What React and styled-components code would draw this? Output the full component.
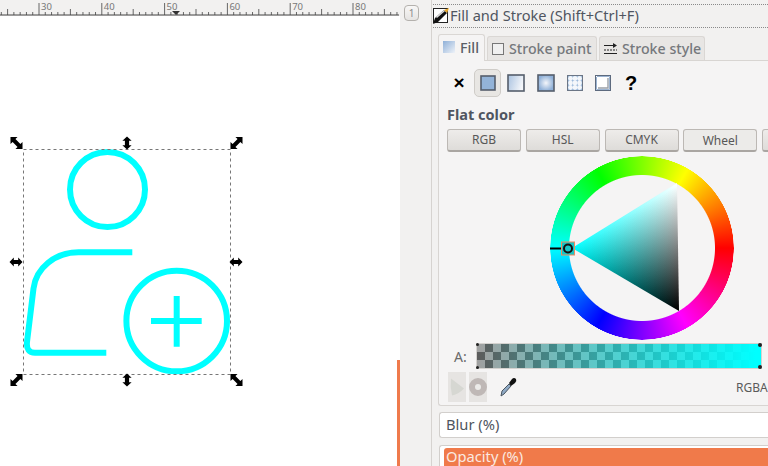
import React from 'react';
import styled, { createGlobalStyle } from 'styled-components';

const Global = createGlobalStyle`
  html, body { margin: 0; padding: 0; background: #f2f1f0; }
  body { font-family: "Noto Sans", "Open Sans", sans-serif; color: #4c4c4c; }
`;

const Root = styled.div`
  width: 768px;
  height: 466px;
  display: flex;
  overflow: hidden;
  position: relative;
  background: #f2f1f0;
`;

const LeftColumn = styled.div`
  width: 400px;
  flex: none;
  display: flex;
  flex-direction: column;
  position: relative;
`;

const RulerBar = styled.svg`
  display: block;
  width: 399px;
  height: 16px;
  flex: none;
`;

const Canvas = styled.div`
  flex: 1;
  background: #fff;
  padding-top: 109px;
`;

const ScrollThumb = styled.div`
  position: absolute;
  right: 0;
  top: 360px;
  bottom: 0;
  width: 3px;
  background: #ef7a4c;
`;

const Gutter = styled.div`
  width: 30px;
  flex: none;
  padding: 5px 0 0 4px;
  box-sizing: border-box;
`;

const CornerButton = styled.div`
  width: 15px;
  height: 16px;
  box-sizing: border-box;
  border: 1px solid #b4b1ad;
  border-radius: 4px;
  background: linear-gradient(#f8f7f6, #e6e4e2);
  font-size: 10px;
  line-height: 14px;
  text-align: center;
  color: #8a8a8a;
`;

const Panel = styled.div`
  flex: 1;
  min-width: 0;
  border-left: 1px solid #d6d3d0;
  margin-left: 1px;
  padding: 4px 0 0 1px;
  display: flex;
  flex-direction: column;
  overflow: hidden;
`;

const TitleBar = styled.div`
  height: 22px;
  flex: none;
  display: flex;
  align-items: center;
  border-top: 1px dotted #8a8a8a;
  border-bottom: 1px dotted #8a8a8a;
  font-size: 14.6px;
  white-space: nowrap;
  color: #4f5560;
`;

const TitleText = styled.span`
  margin-bottom: 2px;
`;

const Body = styled.div`
  padding: 6px 0 0 5px;
  width: 340px;
  display: flex;
  flex-direction: column;
`;

const TabRow = styled.div`
  display: flex;
  gap: 2px;
  height: 26px;
  align-items: flex-end;
`;

const Tab = styled.div`
  height: ${(p) => (p.$active ? 27 : 24)}px;
  margin-bottom: ${(p) => (p.$active ? -1 : 0)}px;
  padding-bottom: ${(p) => (p.$active ? 2 : 0)}px;
  position: relative;
  width: ${(p) => p.$w}px;
  box-sizing: border-box;
  display: flex;
  align-items: center;
  gap: 5px;
  padding-left: 4px;
  border: 1px solid #dad7d4;
  border-bottom: none;
  border-radius: 3px 3px 0 0;
  background: ${(p) => (p.$active ? '#f5f4f4' : '#e8e6e4')};
  font-size: 14.2px;
  font-weight: 500;
  color: ${(p) => (p.$active ? '#5a5f66' : '#75787c')};
  white-space: nowrap;
`;

const Notebook = styled.div`
  height: 346px;
  width: 340px;
  box-sizing: border-box;
  border: 1px solid #d8d5d2;
  border-right: none;
  border-radius: 0 0 0 3px;
  background: #f5f4f4;
  padding: 8px 0 0 8px;
  display: flex;
  flex-direction: column;
`;

const PaintRow = styled.div`
  display: flex;
  align-items: center;
  height: 28px;
`;

const PaintSlot = styled.div`
  width: ${(p) => p.$w}px;
  height: 28px;
  flex: none;
  box-sizing: border-box;
  display: flex;
  align-items: center;
  justify-content: center;
  margin-right: ${(p) => p.$mr || 0}px;
  ${(p) => p.$on && `
    border: 1px solid #cfccc8;
    border-radius: 5px;
    background: #e8e6e3;
  `}
`;

const Mark = styled.span`
  font-family: "Liberation Sans", sans-serif;
  font-weight: 700;
  font-size: ${(p) => p.$size}px;
  color: #000;
`;

const SectionLabel = styled.div`
  font-size: 14.5px;
  font-weight: 700;
  color: #4f5560;
  line-height: 18px;
  margin-top: 8px;
`;

const ModeRow = styled.div`
  display: flex;
  gap: 4.75px;
  margin-top: 6px;
`;

const ModeButton = styled.div`
  width: 74px;
  height: 23px;
  flex: none;
  box-sizing: border-box;
  border: 1px solid #bcb8b4;
  border-bottom: 2px solid #aaa6a2;
  border-radius: 3px;
  background: ${(p) => (p.$on ? '#ecebe9' : 'linear-gradient(#eeecea, #dedcd9)')};
  font-size: 12px;
  line-height: ${(p) => (p.$on ? 22 : 20)}px;
  text-align: center;
  color: #585858;
`;

const WheelArea = styled.div`
  height: 185px;
  margin-top: 4px;
  padding-left: 103px;
`;

const Wheel = styled.div`
  position: relative;
  width: 184px;
  height: 184px;
`;

const Ring = styled.div`
  width: 100%;
  height: 100%;
  border-radius: 50%;
  background: conic-gradient(from 90deg, #f00, #f0f, #00f, #0ff, #0f0, #ff0, #f00);
  mask: radial-gradient(circle closest-side, transparent 72.5px, #000 73.5px, #000 91.5px, transparent 92px);
`;

const WheelOverlay = styled.svg`
  position: absolute;
  inset: 0;
  width: 184px;
  height: 184px;
`;

const BlendLayer = styled.rect`
  mix-blend-mode: plus-lighter;
`;

const AlphaRow = styled.div`
  display: flex;
  align-items: center;
  height: 24px;
  margin-top: 3px;
`;

const AlphaLabel = styled.div`
  width: 30px;
  padding-left: 7px;
  box-sizing: border-box;
  font-size: 14px;
  color: #6a6a6a;
`;

const AlphaTrack = styled.div`
  position: relative;
  width: 284px;
  height: 24px;
  box-sizing: border-box;
  background:
    linear-gradient(90deg, rgba(0, 255, 255, 0), #0ff 98%),
    conic-gradient(#5c5c5c 25%, #a0a0a0 0 50%, #5c5c5c 0 75%, #a0a0a0 0) 0 0 / 16px 16px;
  box-shadow: 0 0 0 1px #d4d2cf;
`;

const Corner = styled.i`
  position: absolute;
  width: ${(p) => (p.$big ? 4 : 3)}px;
  height: ${(p) => (p.$big ? 4 : 3)}px;
  border-radius: 50%;
  background: #222;
  ${(p) => (p.$top ? 'top: -1px;' : 'bottom: -1px;')}
  ${(p) => (p.$left ? 'left: -1px;' : 'right: -1px;')}
`;

const ToolRow = styled.div`
  display: flex;
  align-items: center;
  margin-top: 4px;
  padding-left: 1px;
  height: 30px;
`;

const ToolToggle = styled.div`
  width: 18px;
  height: 30px;
  margin-right: 3px;
  background: #e6e4e2;
  display: flex;
  align-items: center;
  justify-content: center;
`;

const DropperSlot = styled.div`
  margin-left: 10px;
  display: flex;
`;

const Readout = styled.div`
  margin-left: auto;
  font-size: 12px;
  color: #5a5a5a;
  width: 42px;
  white-space: nowrap;
`;

const Frame = styled.div`
  margin: 6px 0 0 1px;
  height: 26px;
  width: 340px;
  box-sizing: border-box;
  border: 1px solid #d2cfcc;
  border-right: none;
  border-radius: 3px 0 0 3px;
  background: #fff;
  padding-left: 6px;
  font-size: 14.7px;
  line-height: 23px;
  color: #4f5560;
`;

const OpacityFrame = styled.div`
  margin: 7px 0 0 1px;
  width: 340px;
  height: 30px;
  box-sizing: border-box;
  border: 1px solid #d2cfcc;
  border-right: none;
  border-radius: 3px 0 0 3px;
  background: #fff;
  padding: 2px 0 0 4px;
`;

const OpacityFill = styled.div`
  height: 24px;
  border-radius: 3px 0 0 3px;
  background: #f07a4a;
  color: #fbe9e0;
  font-size: 14.7px;
  line-height: 17px;
  padding-left: 2px;
`;

function Ruler() {
  const origin = 39;
  const step = 62.8;
  const ticks = [];
  for (let i = -6; i < 60; i++) {
    const x = origin + (i * step) / 10;
    if (x < 0 || x > 399) continue;
    const major = i % 10 === 0;
    const mid = Math.abs(i % 5) === 0;
    ticks.push(
      <line key={i} x1={x} x2={x} y1={major ? 3 : mid ? 9 : 12} y2={15} stroke="#666" strokeWidth="1" />
    );
  }
  return (
    <RulerBar viewBox="0 0 399 16">
      {ticks}
      <line x1="0" x2="399" y1="15" y2="15" stroke="#444" strokeWidth="1" />
      {[30, 40, 50, 60, 70, 80].map((n, i) => (
        <text key={n} x={origin + 2 + i * step} y="10" fontSize="9.5" fill="#777" fontFamily="Noto Sans">{n}</text>
      ))}
      <polygon points="172,11 180,11 176,15" fill="#333" />
    </RulerBar>
  );
}

const ARROW_STRAIGHT = 'M-6.5 0 L-2.2 -4.6 L-2.2 -2.1 L2.2 -2.1 L2.2 -4.6 L6.5 0 L2.2 4.6 L2.2 2.1 L-2.2 2.1 L-2.2 4.6 Z';
const ARROW_DIAGONAL = 'M-8.5 0 L-3.5 -5 L-3.5 -2 L3.5 -2 L3.5 -5 L8.5 0 L3.5 5 L3.5 2 L-3.5 2 L-3.5 5 Z';
const handles = [
  [16.5, 143, 45, ARROW_DIAGONAL], [127, 143, 90, ARROW_STRAIGHT], [236.5, 143, -45, ARROW_DIAGONAL],
  [16, 262, 0, ARROW_STRAIGHT], [236, 262, 0, ARROW_STRAIGHT],
  [16.5, 380, -45, ARROW_DIAGONAL], [127, 380, 90, ARROW_STRAIGHT], [236.5, 380, 45, ARROW_DIAGONAL],
];

function Selection() {
  return (
    <svg width="250" height="270" viewBox="0 125 250 270" style={{ display: 'block' }}>
      <g fill="none" stroke="#0ff" strokeWidth="6">
        <circle cx="107.5" cy="189.5" r="37.5" />
        <path d="M132.3 252.3 H78.5 C55 252.3 36 268 33.5 288.5 L27 342 C26.3 349 29 352.7 35 352.7 H106.3" />
        <circle cx="176.7" cy="321" r="50.3" />
        <path d="M151 321 H201.7 M176.7 296 V346.7" />
      </g>
      <rect x="23.5" y="149.5" width="207" height="225" fill="none" stroke="#777" strokeDasharray="3 3" />
      {handles.map(([x, y, r, d]) => (
        <path key={`${x}-${y}`} d={d} transform={`translate(${x} ${y}) rotate(${r})`} fill="#000" />
      ))}
    </svg>
  );
}

function WheelDrawing() {
  // wheel box starts at page x 550, y 156
  // triangle = cyan share + white share added together, clipped after blending so edges stay clean
  return (
    <WheelOverlay viewBox="550 156 184 184">
      <defs>
        <clipPath id="triangleClip">
          <polygon points="572,248 677,183 679,311" />
        </clipPath>
        <linearGradient id="cyanShare" gradientUnits="userSpaceOnUse" x1="572" y1="248" x2="678" y2="249.7">
          <stop offset="0" stopColor="#0ff" />
          <stop offset="1" stopColor="#000" />
        </linearGradient>
        <linearGradient id="whiteShare" gradientUnits="userSpaceOnUse" x1="621.5" y1="277.2" x2="677" y2="183">
          <stop offset="0" stopColor="#000" />
          <stop offset="1" stopColor="#fff" />
        </linearGradient>
      </defs>
      <g clipPath="url(#triangleClip)">
        <rect x="565" y="178" width="120" height="140" fill="url(#cyanShare)" />
        <BlendLayer x="565" y="178" width="120" height="140" fill="url(#whiteShare)" />
      </g>
      <line x1="550" x2="563" y1="248.5" y2="248.5" stroke="#000" strokeWidth="2" />
      <rect x="561.5" y="242" width="13" height="13" fill="#17c4c4" stroke="#f08a60" />
      <circle cx="568" cy="248.5" r="4" fill="none" stroke="#111" strokeWidth="2" />
    </WheelOverlay>
  );
}

function Swatch({ fill, size, defs }) {
  return (
    <svg width={size} height={size} viewBox={`0 0 ${size} ${size}`}>
      {defs}
      <rect x="1" y="1" width={size - 2} height={size - 2} fill={fill} stroke="#555e6c" strokeWidth="1.6" />
    </svg>
  );
}

function PatternSwatch() {
  return (
    <svg width="16" height="16" viewBox="0 0 16 16">
      <rect x="0.5" y="0.5" width="15" height="15" fill="#93b3d8" stroke="#6c7686" />
      {[3.5, 8, 12.5].flatMap((x) => [3.5, 8, 12.5].map((y) => (
        <circle key={`${x}${y}`} cx={x} cy={y} r="2.4" fill="#f4f7fb" />
      )))}
    </svg>
  );
}

function NoneSwatch() {
  return (
    <svg width="16" height="16" viewBox="0 0 16 16">
      <rect x="0.5" y="0.5" width="15" height="15" fill="#fff" stroke="#5d6a7e" />
      <path d="M2 1.5 H14.5 V14.5 H1.5 V2" fill="none" stroke="#9cb4d2" />
      <path d="M3 13 H13 V3" fill="none" stroke="#9aa0a8" strokeWidth="1.4" />
    </svg>
  );
}

function TitleIcon() {
  return (
    <svg width="17" height="18" viewBox="0 0 17 18">
      <rect x="0.5" y="1.5" width="14" height="14" fill="#fff" stroke="#222" />
      <path d="M0 17 L2 11 L11 3 L14 6 L5 15 Z" fill="#111" />
      <path d="M3 10 L11 3 L12 4 L4 11 Z" fill="#ddd" />
      <path d="M11 3 L16 1 L14 6 Z" fill="#e8a92e" />
    </svg>
  );
}

function StrokeStyleIcon() {
  return (
    <svg width="13" height="12" viewBox="0 0 13 12">
      <path d="M0 2.5 H10" stroke="#222" />
      <path d="M9 0 L13 2.5 L9 5 Z" fill="#222" />
      <path d="M0 7 H13" stroke="#222" strokeDasharray="2 1" />
      <path d="M0 10.5 H13" stroke="#222" />
    </svg>
  );
}

function Dropper() {
  return (
    <svg width="17" height="20" viewBox="0 0 17 20">
      <path d="M1 19 L2 14 L9 7 L11 9 L4 17 Z" fill="#8fa9c4" stroke="#4a5560" />
      <path d="M9 6 L12 2 Q14 0 16 2 Q17 4 15 6 L11 9 Z" fill="#111" />
    </svg>
  );
}

export default function App() {
  return (
    <Root>
      <Global />
      <LeftColumn>
        <Ruler />
        <Canvas>
          <Selection />
        </Canvas>
        <ScrollThumb />
      </LeftColumn>
      <Gutter>
        <CornerButton>1</CornerButton>
      </Gutter>
      <Panel>
        <TitleBar>
          <TitleIcon />
          <TitleText>Fill and Stroke (Shift+Ctrl+F)</TitleText>
        </TitleBar>
        <Body>
          <TabRow>
            <Tab $active $w={47}>
              <svg width="12" height="12"><defs><linearGradient id="tf" x1="0" y1="0" x2="1" y2="1"><stop offset="0" stopColor="#8fb0d8" /><stop offset="1" stopColor="#eef2f8" /></linearGradient></defs><rect width="12" height="12" fill="url(#tf)" /></svg>
              Fill
            </Tab>
            <Tab $w={110}>
              <svg width="12" height="12"><rect x="0.5" y="0.5" width="11" height="11" fill="#f0f0f0" stroke="#777" /></svg>
              Stroke paint
            </Tab>
            <Tab $w={106}>
              <StrokeStyleIcon />
              Stroke style
            </Tab>
          </TabRow>
          <Notebook>
            <PaintRow>
              <PaintSlot $w={24} $mr={3}><Mark $size={19}>×</Mark></PaintSlot>
              <PaintSlot $w={27} $on>
                <Swatch fill="#93b3d8" size={16} />
              </PaintSlot>
              <PaintSlot $w={30}>
                <Swatch
                  size={18}
                  fill="url(#lin)"
                  defs={<defs><linearGradient id="lin" x1="0" y1="0" x2="1" y2="0.3"><stop offset="0" stopColor="#a9c2e0" /><stop offset="1" stopColor="#f4f6fa" /></linearGradient></defs>}
                />
              </PaintSlot>
              <PaintSlot $w={30}>
                <Swatch
                  size={18}
                  fill="url(#rad)"
                  defs={<defs><radialGradient id="rad"><stop offset="0" stopColor="#f4f6fa" /><stop offset="1" stopColor="#8fb0d8" /></radialGradient></defs>}
                />
              </PaintSlot>
              <PaintSlot $w={28}><PatternSwatch /></PaintSlot>
              <PaintSlot $w={28}><NoneSwatch /></PaintSlot>
              <PaintSlot $w={28}><Mark $size={20}>?</Mark></PaintSlot>
            </PaintRow>
            <SectionLabel>Flat color</SectionLabel>
            <ModeRow>
              <ModeButton>RGB</ModeButton>
              <ModeButton>HSL</ModeButton>
              <ModeButton>CMYK</ModeButton>
              <ModeButton $on>Wheel</ModeButton>
              <ModeButton />
            </ModeRow>
            <WheelArea>
              <Wheel>
                <Ring />
                <WheelDrawing />
              </Wheel>
            </WheelArea>
            <AlphaRow>
              <AlphaLabel>A:</AlphaLabel>
              <AlphaTrack>
                <Corner $top $left />
                <Corner $left />
                <Corner $top $big />
                <Corner $big />
              </AlphaTrack>
            </AlphaRow>
            <ToolRow>
              <ToolToggle>
                <svg width="16" height="20" viewBox="0 0 16 20"><path d="M2 1.5 L15 11.5 Q10 17 3 18.5 Q1 10 2 1.5 Z" fill="#d6d7d2" /></svg>
              </ToolToggle>
              <ToolToggle>
                <svg width="18" height="18" viewBox="0 0 18 18"><circle cx="9" cy="9" r="6" fill="#ecebe9" stroke="#bfb8b6" strokeWidth="6" /></svg>
              </ToolToggle>
              <DropperSlot><Dropper /></DropperSlot>
              <Readout>RGBA</Readout>
            </ToolRow>
          </Notebook>
          <Frame>Blur (%)</Frame>
          <OpacityFrame>
            <OpacityFill>Opacity (%)</OpacityFill>
          </OpacityFrame>
        </Body>
      </Panel>
    </Root>
  );
}
